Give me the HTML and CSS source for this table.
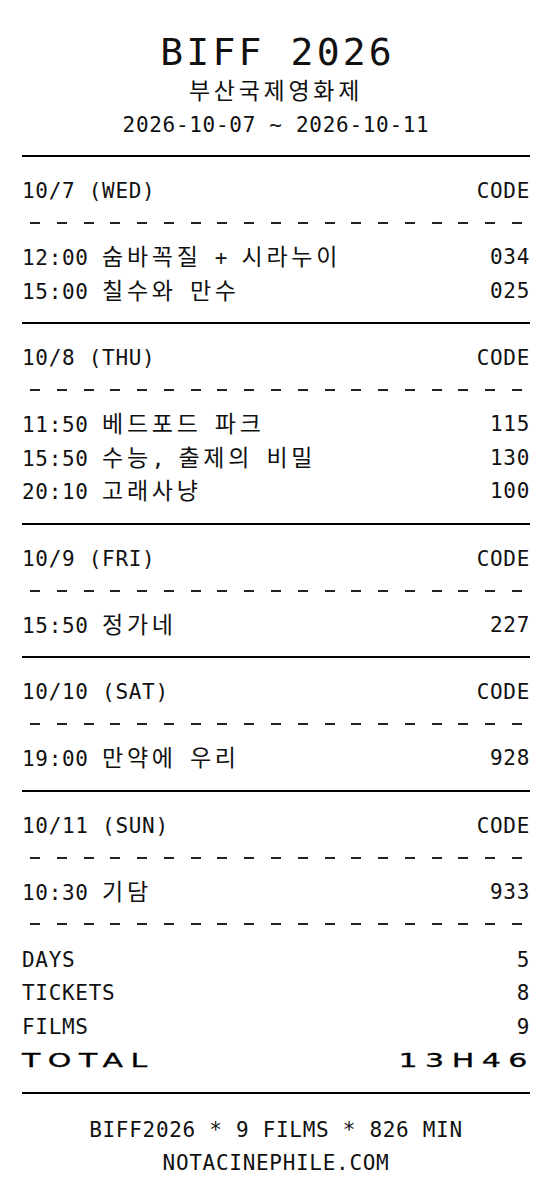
FILE: index.html
```html
<!DOCTYPE html>
<html lang="ko">
<head>
	<meta charset="UTF-8">
	<meta name="viewport" content="width=device-width, initial-scale=1.0">
	<title>BIFF 2026</title>
	<link rel="stylesheet" href="styles.css">
</head>
<body>
<div class="receipt">

	<div class="head">
		<h1 class="title">BIFF 2026</h1>
		<div class="subtitle"><span class="ko">부산국제영화제</span></div>
		<div class="dates">2026-10-07 ~ 2026-10-11</div>
	</div>

	<div class="day">
		<div class="row"><span>10/7 (WED)</span><span>CODE</span></div>
		<div class="dash"></div>
		<div class="row"><span>12:00 <span class="ko">숨바꼭질</span> + <span class="ko">시라누이</span></span><span>034</span></div>
		<div class="row"><span>15:00 <span class="ko">칠수와</span> <span class="ko">만수</span></span><span>025</span></div>
	</div>

	<div class="day">
		<div class="row"><span>10/8 (THU)</span><span>CODE</span></div>
		<div class="dash"></div>
		<div class="row"><span>11:50 <span class="ko">베드포드</span> <span class="ko">파크</span></span><span>115</span></div>
		<div class="row"><span>15:50 <span class="ko">수능</span>, <span class="ko">출제의</span> <span class="ko">비밀</span></span><span>130</span></div>
		<div class="row"><span>20:10 <span class="ko">고래사냥</span></span><span>100</span></div>
	</div>

	<div class="day">
		<div class="row"><span>10/9 (FRI)</span><span>CODE</span></div>
		<div class="dash"></div>
		<div class="row"><span>15:50 <span class="ko">정가네</span></span><span>227</span></div>
	</div>

	<div class="day">
		<div class="row"><span>10/10 (SAT)</span><span>CODE</span></div>
		<div class="dash"></div>
		<div class="row"><span>19:00 <span class="ko">만약에</span> <span class="ko">우리</span></span><span>928</span></div>
	</div>

	<div class="day last">
		<div class="row"><span>10/11 (SUN)</span><span>CODE</span></div>
		<div class="dash"></div>
		<div class="row"><span>10:30 <span class="ko">기담</span></span><span>933</span></div>
		<div class="dash"></div>
		<div class="row"><span>DAYS</span><span>5</span></div>
		<div class="row"><span>TICKETS</span><span>8</span></div>
		<div class="row"><span>FILMS</span><span>9</span></div>
		<div class="row total"><span class="total-label">TOTAL</span><span class="total-value">13H46</span></div>
	</div>

	<div class="foot">
		<div class="row center">BIFF2026 <span class="star">*</span> 9 FILMS <span class="star">*</span> 826 MIN</div>
		<div class="row center">NOTACINEPHILE.COM</div>
	</div>

</div>
</body>
</html>
```

FILE: styles.css
```css
body {
	margin: 0;
	background: #fff;
	color: #111;
	font-family: "DejaVu Sans Mono", "Noto Sans CJK KR", monospace;
	font-size: 21px;
	letter-spacing: 0.7px;
}
.receipt {
	padding: 0 22px;
}

/* header */
.head {
	padding-top: 29px;
	padding-bottom: 13px;
	border-bottom: 2px solid #000;
	text-align: center;
}
.title {
	margin: 0;
	font-size: 38px;
	font-weight: normal;
	line-height: 46px;
	letter-spacing: 3.2px;
	padding-left: 3.2px;
}
.subtitle,
.dates {
	height: 33.5px;
	line-height: 33.5px;
}

/* korean takes two cells */
.ko {
	font-size: 23px;
	letter-spacing: 3.7px;
}

/* day blocks */
.day {
	padding-top: 18px;
	padding-bottom: 14px;
	border-bottom: 2px solid #000;
}
.row {
	display: flex;
	justify-content: space-between;
	height: 33.5px;
	line-height: 33.5px;
	white-space: pre;
}
.dash {
	height: 32.5px;
	position: relative;
}
.dash::before {
	content: "";
	position: absolute;
	left: 8px;
	width: 492px;
	top: 13.5px;
	height: 2px;
	background: repeating-linear-gradient(90deg, #222 0 10px, transparent 10px 26.78px);
}
.day.last .dash + .row + .dash {
	height: 34.5px;
}
.day.last {
	padding-bottom: 14px;
}

/* wide TOTAL line */
.total {
	font-family: "DejaVu Sans", sans-serif;
	font-size: 20px;
	letter-spacing: 5px;
	color: #000;
}
.total-label,
.total-value {
	display: inline-block;
	transform: scaleX(1.5);
	-webkit-text-stroke: 0.3px #000;
}
.total-label {
	transform-origin: left center;
}
.total-value {
	transform-origin: right center;
	margin-right: -5px;
}

/* footer */
.foot {
	padding-top: 20px;
}
.center {
	justify-content: center;
}
.star {
	vertical-align: -4px;
}
```
